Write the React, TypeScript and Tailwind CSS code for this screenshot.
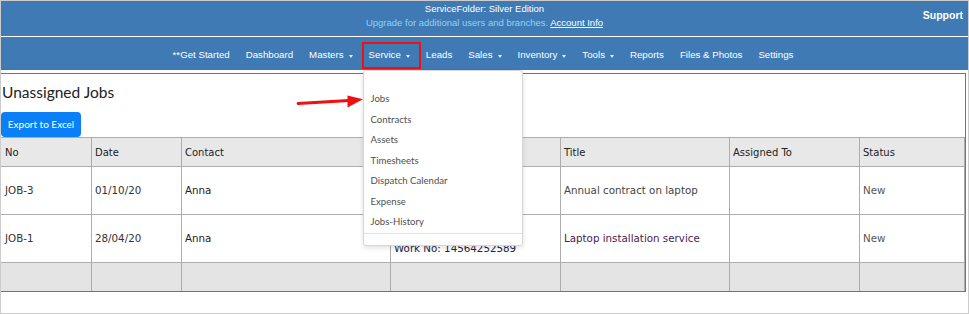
import React from "react";

const navItems = [
  { label: "**Get Started" },
  { label: "Dashboard" },
  { label: "Masters", caret: true },
  { label: "Service", caret: true, active: true },
  { label: "Leads" },
  { label: "Sales", caret: true },
  { label: "Inventory", caret: true },
  { label: "Tools", caret: true },
  { label: "Reports" },
  { label: "Files & Photos" },
  { label: "Settings" },
];

const serviceMenu = [
  "Jobs",
  "Contracts",
  "Assets",
  "Timesheets",
  "Dispatch Calendar",
  "Expense",
  "Jobs-History",
];

const colWidths = ["w-[91px]", "w-[90px]", "w-[209px]", "w-[170px]", "w-[169px]", "w-[130px]", "w-[105px]"];

// 4th column header sits under the open menu
const headers = ["No", "Date", "Contact", "", "Title", "Assigned To", "Status"];

const jobs = [
  {
    no: "JOB-3",
    date: "01/10/20",
    contact: "Anna",
    phone: "",
    title: "Annual contract on laptop",
    titleColor: "text-[#444444]",
    status: "New",
  },
  {
    no: "JOB-1",
    date: "28/04/20",
    contact: "Anna",
    phone: "Work No: 14564252589",
    title: "Laptop installation service",
    titleColor: "text-[#4f1850]",
    status: "New",
  },
];

function Caret() {
  return (
    <span className="ml-[5px] mt-[1px] w-0 h-0 border-x-[2.5px] border-t-[3px] border-x-transparent border-t-[#e4eaf3]" />
  );
}

function ServiceDropdown() {
  return (
    <div className="absolute -left-[1px] top-[26px] z-10 w-[160px] h-[176px] bg-white border border-[#d6d6d6] rounded-[3px] shadow-[0_2px_5px_rgba(0,0,0,0.12)] font-['Lato',sans-serif] text-[9.6px] text-[#505050]">
      <ul className="pt-[18px]">
        {serviceMenu.map((item) => (
          <li key={item} className="h-[20.5px] flex items-center px-[7px]">
            {item}
          </li>
        ))}
      </ul>
      <div className="h-px bg-[#e2e2e2]" />
    </div>
  );
}

export default function App() {
  return (
    <div className="relative w-[969px] h-[314px] border border-[#cccccc] bg-white overflow-hidden">
      {/* Top header */}
      <header className="grid grid-cols-[1fr_auto_1fr] h-[35px] bg-[#3f7ab5] font-['Liberation_Sans',Arial,sans-serif] text-white">
        <div />
        <div className="flex flex-col items-center pt-[1px] text-[9.5px] leading-[13.5px]">
          <span>ServiceFolder: Silver Edition</span>
          <span className="text-[#8fd2f3]">
            Upgrade for additional users and branches.{" "}
            <a className="text-white underline">Account Info</a>
          </span>
        </div>
        <div className="justify-self-end pr-[5px] pt-[7px] text-[10.5px] font-bold">Support</div>
      </header>
      <div className="h-px bg-white" />

      {/* Nav bar */}
      <nav className="flex justify-center gap-[16px] h-[33px] pt-[5px] pr-[3px] bg-[#3f7ab5] font-['Liberation_Sans',Arial,sans-serif] text-[9.7px] text-white">
        {navItems.map((item) =>
          item.active ? (
            <div
              key={item.label}
              className="relative flex items-center h-[27px] -ml-[7px] -mr-[11px] pl-[5px] pr-[9px] border-2 border-[#ee1111]"
            >
              {item.label}
              <Caret />
              <ServiceDropdown />
            </div>
          ) : (
            <div key={item.label} className="flex items-center h-[27px]">
              {item.label}
              {item.caret && <Caret />}
            </div>
          )
        )}
      </nav>
      <div className="h-[3px]" />

      {/* Content */}
      <main className="w-[965px] border-t border-r border-b border-[#5b6fd1]">
        <h1 className="h-[38px] pt-[8px] pl-[1px] text-[15.5px] leading-[20px] text-[#222222] font-['Lato',sans-serif]">
          Unassigned Jobs
        </h1>
        <button className="block h-[25px] w-[80px] rounded-[4px] bg-[#0b7ff8] text-white text-[10px] font-['Lato',sans-serif]">
          Export to Excel
        </button>

        <div className="border-t border-[#adadad] font-['DejaVu_Sans',Verdana,sans-serif]">
          <div className="flex h-[29px] bg-[#e8e8e8] border-b border-[#adadad] text-[10px] text-[#222222]">
            {headers.map((h, i) => (
              <div
                key={i}
                className={`${colWidths[i]} shrink-0 flex items-center border-r border-[#adadad] ${i === 0 ? "pl-[4px]" : "pl-[3px]"}`}
              >
                {h}
              </div>
            ))}
          </div>

          {jobs.map((job) => (
            <div key={job.no} className="flex h-[48px] border-b border-[#adadad] text-[10.3px]">
              <div className={`${colWidths[0]} shrink-0 flex items-center pl-[4px] border-r border-[#adadad] text-[#333333]`}>
                {job.no}
              </div>
              <div className={`${colWidths[1]} shrink-0 flex items-center pl-[3px] border-r border-[#adadad] text-[#333333]`}>
                {job.date}
              </div>
              <div className={`${colWidths[2]} shrink-0 flex items-center pl-[3px] border-r border-[#adadad] text-[#222222]`}>
                {job.contact}
              </div>
              <div className={`${colWidths[3]} shrink-0 flex flex-col justify-end pb-[4px] pl-[3px] leading-[20px] border-r border-[#adadad] text-[#1d2545]`}>
                {job.phone}
              </div>
              <div className={`${colWidths[4]} shrink-0 flex items-center pl-[3px] border-r border-[#adadad] ${job.titleColor}`}>
                {job.title}
              </div>
              <div className={`${colWidths[5]} shrink-0 border-r border-[#adadad]`} />
              <div className={`${colWidths[6]} shrink-0 flex items-center pl-[3px] border-r border-[#adadad] text-[#555555]`}>
                {job.status}
              </div>
            </div>
          ))}

          <div className="flex h-[28px] bg-[#e4e4e4]">
            {colWidths.map((w, i) => (
              <div key={i} className={`${w} shrink-0 border-r border-[#adadad]`} />
            ))}
          </div>
        </div>
      </main>

      {/* Annotation arrow */}
      <svg className="absolute left-[290px] top-[88px]" width="76" height="22" viewBox="0 0 76 22">
        <line x1="7" y1="14.5" x2="58" y2="11.5" stroke="#f01010" strokeWidth="2.8" strokeLinecap="round" />
        <polygon points="56.5,6.5 72,10.3 56.5,18.5" fill="#f01010" />
      </svg>
    </div>
  );
}
